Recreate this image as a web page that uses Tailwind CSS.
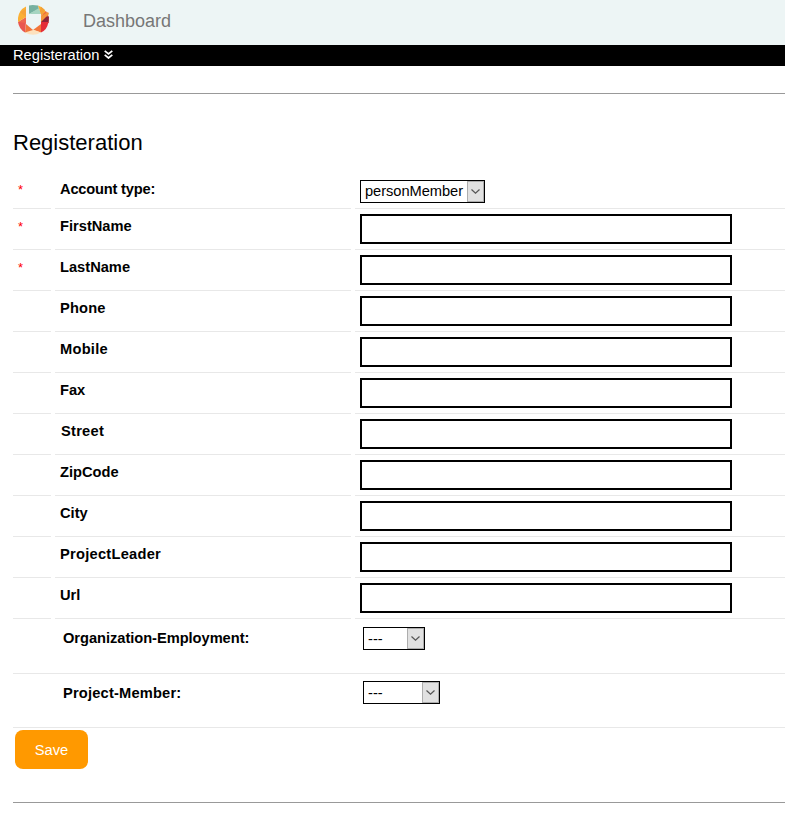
<!DOCTYPE html>
<html lang="en">
<head>
<meta charset="utf-8">
<title>Registeration</title>
<script src="https://cdn.jsdelivr.net/npm/@tailwindcss/browser@4"></script>
</head>
<body class="bg-white text-black font-['Liberation_Sans',Arial,sans-serif] text-[14.67px] leading-[18px] overflow-hidden">
<header class="h-[45px] bg-[#edf5f5] flex items-start pl-[18px]">
  <svg class="w-[31px] h-[30px] mt-[5px] shrink-0" viewBox="0 0 31 30">
    <path d="M11 0.4Q15-.3 20 .6L21 4 11 9Z" fill="#76b1a0"/>
    <path d="M11 9 21 3 23 9Z" fill="#a6d5c1"/>
    <path d="M20 .6Q27 3 30 11L23 9Z" fill="#fbb034"/>
    <path d="M23 1.8 27 5 23.5 11 22 6Z" fill="#f4a236"/>
    <path d="M23 11 28 6Q31 10 31 15L23 11Z" fill="#ee6b3b"/>
    <path d="M23 12 31 15 30 19 23 18Z" fill="#f2753b"/>
    <path d="M23 11 31 11.500 30.500 18 23 18Z" fill="#8c2338"/>
    <path d="M23 17 31 9 30 7 23 11Z" fill="#f4953a"/>
    <path d="M23 17 30.500 17Q29 25 23 27.500Z" fill="#e42e38"/>
    <path d="M23 19 23 27.500 15 25Z" fill="#f2753b"/>
    <path d="M7 27.500 15 24.500 23 27.500Q15 32 7 27.500Z" fill="#fde1bd"/>
    <path d="M8 19 15 25 7 27.500Z" fill="#f17439"/>
    <path d="M0 17 8 17 7 27.500Q1 24 0 17Z" fill="#e9564f"/>
    <path d="M8 12 8 18 0 17Z" fill="#ee6650"/>
    <path d="M8 1.500 8 12 0 17Q-1 6 8 1.500Z" fill="#fbb034"/>
    <path d="M8 4 8 12 2 7Z" fill="#f6a337"/>
  </svg>
  <span class="ml-[34px] mt-[10px] text-[18px] leading-[22px] text-[#777]">Dashboard</span>
</header>
<nav class="h-[21px] bg-black text-white flex items-center pl-[13px] pb-[2px]">
  <span>Registeration</span>
  <svg class="w-[9px] h-[9px] ml-[4.6px]" viewBox="0 0 9 9" fill="none" stroke="#fff" stroke-width="1.7"><path d="M.7.8 4.5 4 8.3.8M.7 4.8 4.5 8 8.3 4.8"/></svg>
</nav>
<main class="pl-[13px]">
  <hr class="mt-[27px] border-0 h-px bg-[#999]">
  <h1 class="mt-[35px] text-[22px] leading-[27px]">Registeration</h1>
  <form class="mt-[19px]">
    <div class="flex gap-1 h-[34px]">
      <div class="w-[38px] border-b border-[#e8e8e8] pl-[5px] pt-[6px] text-[13px] text-[#f00]">*</div>
      <div class="w-[296px] border-b border-[#e8e8e8] pl-[5px] pt-[5px] font-bold tracking-[-0.2px]">Account type:</div>
      <div class="flex-1 border-b border-[#e8e8e8] pl-[5px] pt-[5px]"><div class="w-[125px] h-[23px] border border-black pl-1 flex items-center justify-between"><span class="pb-[2px] tracking-[-0.05px]">personMember</span><span class="w-[17px] h-full border border-[#adadad] bg-[#e1e1e1] flex items-center justify-center"><svg class="w-[9px] h-[5px]" viewBox="0 0 9 5" fill="none" stroke="#555" stroke-width="1.2"><path d="M.5.5 4.5 4.2 8.5.5"/></svg></span></div></div>
    </div>
    <div class="flex gap-1 h-[41px]">
      <div class="w-[38px] border-b border-[#e8e8e8] pl-[5px] pt-[9px] text-[13px] text-[#f00]">*</div>
      <div class="w-[296px] border-b border-[#e8e8e8] pl-[5px] pt-[8px] font-bold">FirstName</div>
      <div class="flex-1 border-b border-[#e8e8e8] pl-[5px] pt-[5px]"><input class="block w-[372px] h-[30px] border-2 border-black"></div>
    </div>
    <div class="flex gap-1 h-[41px]">
      <div class="w-[38px] border-b border-[#e8e8e8] pl-[5px] pt-[9px] text-[13px] text-[#f00]">*</div>
      <div class="w-[296px] border-b border-[#e8e8e8] pl-[5px] pt-[8px] font-bold">LastName</div>
      <div class="flex-1 border-b border-[#e8e8e8] pl-[5px] pt-[5px]"><input class="block w-[372px] h-[30px] border-2 border-black"></div>
    </div>
    <div class="flex gap-1 h-[41px]">
      <div class="w-[38px] border-b border-[#e8e8e8]"></div>
      <div class="w-[296px] border-b border-[#e8e8e8] pl-[5px] pt-[8px] font-bold tracking-[0.15px]">Phone</div>
      <div class="flex-1 border-b border-[#e8e8e8] pl-[5px] pt-[5px]"><input class="block w-[372px] h-[30px] border-2 border-black"></div>
    </div>
    <div class="flex gap-1 h-[41px]">
      <div class="w-[38px] border-b border-[#e8e8e8]"></div>
      <div class="w-[296px] border-b border-[#e8e8e8] pl-[5px] pt-[8px] font-bold tracking-[0.25px]">Mobile</div>
      <div class="flex-1 border-b border-[#e8e8e8] pl-[5px] pt-[5px]"><input class="block w-[372px] h-[30px] border-2 border-black"></div>
    </div>
    <div class="flex gap-1 h-[41px]">
      <div class="w-[38px] border-b border-[#e8e8e8]"></div>
      <div class="w-[296px] border-b border-[#e8e8e8] pl-[5px] pt-[8px] font-bold">Fax</div>
      <div class="flex-1 border-b border-[#e8e8e8] pl-[5px] pt-[5px]"><input class="block w-[372px] h-[30px] border-2 border-black"></div>
    </div>
    <div class="flex gap-1 h-[41px]">
      <div class="w-[38px] border-b border-[#e8e8e8]"></div>
      <div class="w-[296px] border-b border-[#e8e8e8] pl-[6px] pt-[8px] font-bold tracking-[0.25px]">Street</div>
      <div class="flex-1 border-b border-[#e8e8e8] pl-[5px] pt-[5px]"><input class="block w-[372px] h-[30px] border-2 border-black"></div>
    </div>
    <div class="flex gap-1 h-[41px]">
      <div class="w-[38px] border-b border-[#e8e8e8]"></div>
      <div class="w-[296px] border-b border-[#e8e8e8] pl-[5px] pt-[8px] font-bold">ZipCode</div>
      <div class="flex-1 border-b border-[#e8e8e8] pl-[5px] pt-[5px]"><input class="block w-[372px] h-[30px] border-2 border-black"></div>
    </div>
    <div class="flex gap-1 h-[41px]">
      <div class="w-[38px] border-b border-[#e8e8e8]"></div>
      <div class="w-[296px] border-b border-[#e8e8e8] pl-[5px] pt-[8px] font-bold">City</div>
      <div class="flex-1 border-b border-[#e8e8e8] pl-[5px] pt-[5px]"><input class="block w-[372px] h-[30px] border-2 border-black"></div>
    </div>
    <div class="flex gap-1 h-[41px]">
      <div class="w-[38px] border-b border-[#e8e8e8]"></div>
      <div class="w-[296px] border-b border-[#e8e8e8] pl-[5px] pt-[8px] font-bold tracking-[0.25px]">ProjectLeader</div>
      <div class="flex-1 border-b border-[#e8e8e8] pl-[5px] pt-[5px]"><input class="block w-[372px] h-[30px] border-2 border-black"></div>
    </div>
    <div class="flex gap-1 h-[41px]">
      <div class="w-[38px] border-b border-[#e8e8e8]"></div>
      <div class="w-[296px] border-b border-[#e8e8e8] pl-[5px] pt-[8px] font-bold">Url</div>
      <div class="flex-1 border-b border-[#e8e8e8] pl-[5px] pt-[5px]"><input class="block w-[372px] h-[30px] border-2 border-black"></div>
    </div>
    <div class="flex items-start h-[55px] border-b border-[#e8e8e8] pl-[50px]">
      <div class="w-[300px] pt-[10px] font-bold tracking-[-0.04px]">Organization-Employment:</div>
      <div class="mt-2 w-[62px] h-[23px] border border-black pl-1 flex items-center justify-between"><span>---</span><span class="w-[17px] h-full border border-[#adadad] bg-[#e1e1e1] flex items-center justify-center"><svg class="w-[9px] h-[5px]" viewBox="0 0 9 5" fill="none" stroke="#555" stroke-width="1.2"><path d="M.5.5 4.5 4.2 8.5.5"/></svg></span></div>
    </div>
    <div class="flex items-start h-[54px] border-b border-[#e8e8e8] pl-[50px]">
      <div class="w-[300px] pt-[10px] font-bold tracking-[0.18px]">Project-Member:</div>
      <div class="mt-[7px] w-[77px] h-[23px] border border-black pl-1 flex items-center justify-between"><span>---</span><span class="w-[17px] h-full border border-[#adadad] bg-[#e1e1e1] flex items-center justify-center"><svg class="w-[9px] h-[5px]" viewBox="0 0 9 5" fill="none" stroke="#555" stroke-width="1.2"><path d="M.5.5 4.5 4.2 8.5.5"/></svg></span></div>
    </div>
    <button type="button" class="block ml-[2px] mt-[2px] w-[73px] h-[39px] rounded-lg bg-[#ff9900] text-white">Save</button>
  </form>
  <hr class="mt-[33px] border-0 h-px bg-[#999]">
</main>
</body>
</html>
